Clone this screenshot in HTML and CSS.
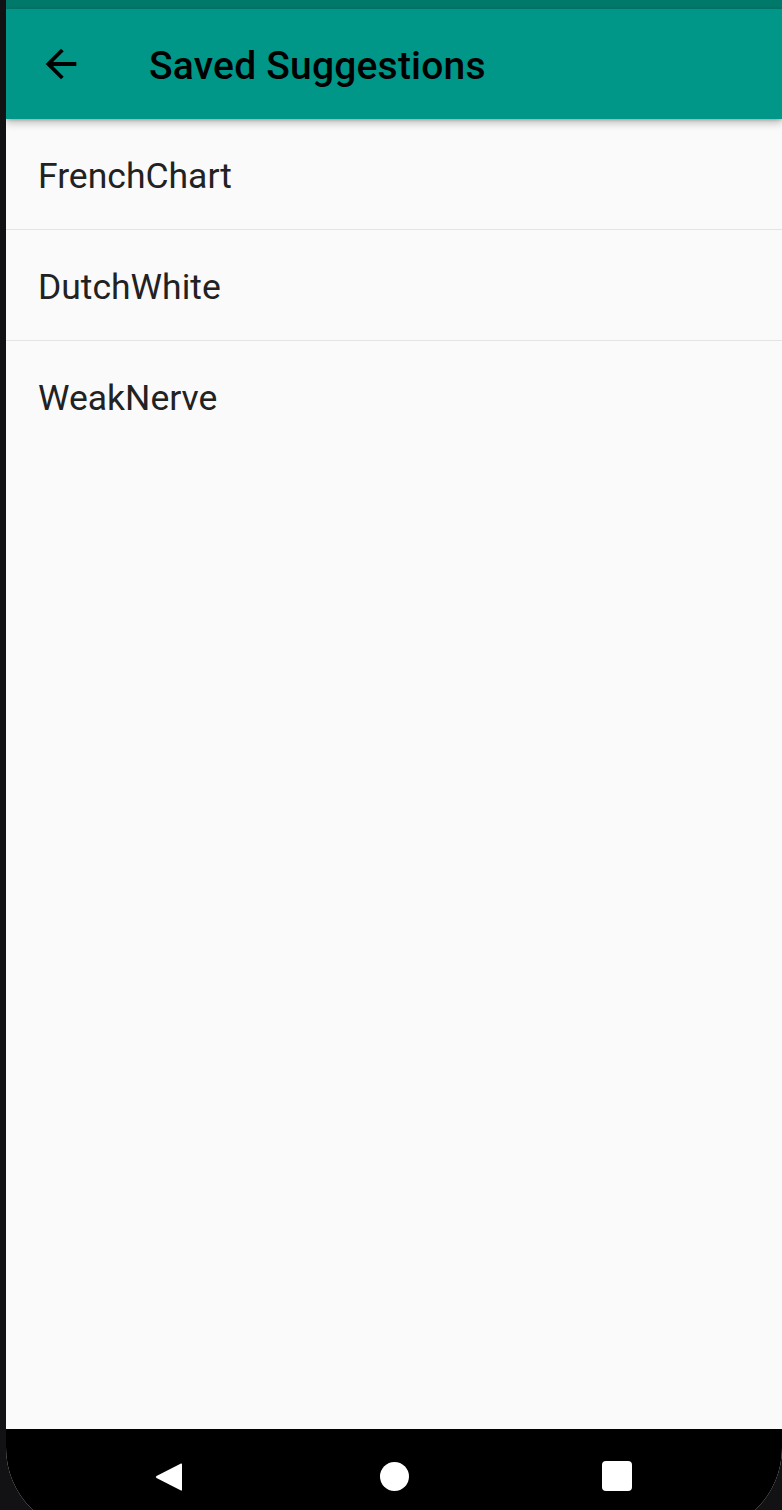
FILE: index.html
```html
<!DOCTYPE html>
<html>
<head>
<meta charset="utf-8">
<link rel="stylesheet" href="styles.css">
<title>Saved Suggestions</title>
</head>
<body>
<div class="screen">
  <div class="status-bar"></div>
  <header class="app-bar">
    <svg class="back" viewBox="0 0 24 24" width="46" height="46"><path d="M20 11H7.83l5.59-5.59L12 4l-8 8 8 8 1.41-1.41L7.83 13H20v-2z" fill="#000"/></svg>
    <h1 class="title">Saved Suggestions</h1>
  </header>
  <main class="list">
    <div class="item divided">FrenchChart</div>
    <div class="item divided">DutchWhite</div>
    <div class="item">WeakNerve</div>
  </main>
  <nav class="nav-bar">
    <svg class="nav-back" viewBox="0 0 30 32" width="30" height="32"><path d="M27 2.5 Q28 2 28 3.5 V28.5 Q28 30 27 29.5 L2.5 17 Q1 16 2.5 15 Z" fill="#fff"/></svg>
    <div class="nav-home"></div>
    <div class="nav-recent"></div>
  </nav>
</div>
</body>
</html>
```
FILE: styles.css
```css
html, body {
  margin: 0;
  padding: 0;
  height: 1510px;
  overflow: hidden;
  background: #121114;
}
.screen {
  margin-left: 6px;
  width: 776px;
  height: 1533px;
  display: flex;
  flex-direction: column;
  background: #fafafa;
  border-radius: 0 0 85px 85px;
  overflow: hidden;
  font-family: Roboto, "Liberation Sans", sans-serif;
}
.status-bar {
  height: 9px;
  background: #00796b;
  flex: none;
}
.app-bar {
  height: 110px;
  flex: none;
  background: #009688;
  display: flex;
  align-items: center;
  box-shadow: 0 4px 8px rgba(0,0,0,0.24), 0 1px 3px rgba(0,0,0,0.2);
  position: relative;
  z-index: 1;
}
.back {
  margin-left: 32px;
  flex: none;
}
.title {
  margin: 4px 0 0 65px;
  font-size: 39px;
  font-weight: 500;
  color: #000;
  letter-spacing: 0.2px;
}
.list {
  flex: 1;
}
.item {
  height: 110px;
  display: flex;
  align-items: center;
  padding-left: 32px;
  padding-top: 3px;
  box-sizing: border-box;
  height: 111px;
  font-size: 35.5px;
  color: #222;
}
.divided {
  border-bottom: 1px solid #e4e4e4;
}
.nav-bar {
  height: 104px;
  flex: none;
  background: #000;
  display: flex;
  align-items: flex-start;
  padding-top: 32px;
  box-sizing: border-box;
  position: relative;
}
.nav-back {
  margin-left: 148px;
  flex: none;
}
.nav-home {
  width: 29px;
  height: 29px;
  border-radius: 50%;
  background: #fff;
  margin-left: 196px;
  margin-top: 1px;
  flex: none;
}
.nav-recent {
  width: 30px;
  height: 30px;
  border-radius: 4px;
  background: #fff;
  margin-left: 193px;
  flex: none;
}
```
